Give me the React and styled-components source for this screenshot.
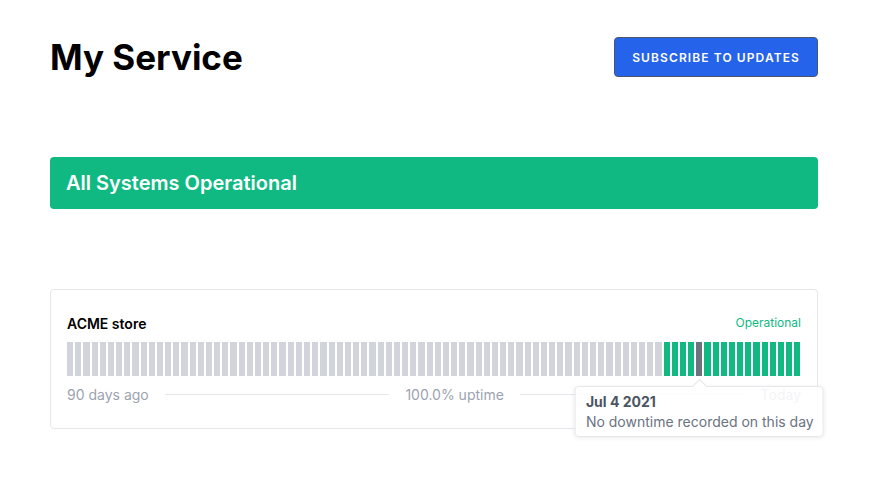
import React from 'react'
import styled, { createGlobalStyle } from 'styled-components'

const GlobalStyle = createGlobalStyle`
  body {
    margin: 0;
    min-height: 100vh;
    background: #ffffff;
    font-family: Inter, "Noto Sans", sans-serif;
    color: #111827;
  }
`

const Page = styled.div`
  width: 768px;
  padding: 37px 0 64px 50px;
`

const Header = styled.header`
  display: flex;
  align-items: center;
  justify-content: space-between;
  height: 40px;
`

const Title = styled.h1`
  margin: 0;
  font-size: 35px;
  line-height: 40px;
  font-weight: 700;
  color: #000000;
`

const SubscribeButton = styled.button`
  height: 40px;
  padding: 0 17px;
  background: #2563eb;
  color: #ffffff;
  border: 1px solid #4a5670;
  border-radius: 4px;
  font-family: Inter, sans-serif;
  font-size: 12px;
  font-weight: 600;
  letter-spacing: 1.1px;
  text-transform: uppercase;
  cursor: pointer;
`

const Banner = styled.div`
  margin-top: 80px;
  height: 52px;
  display: flex;
  align-items: center;
  padding: 0 16px;
  background: #10b981;
  border-radius: 4px;
  color: #ffffff;
  font-size: 20px;
  font-weight: 600;
`

const Card = styled.section`
  margin-top: 80px;
  border: 1px solid #e5e7eb;
  border-radius: 4px;
  padding: 24px 16px;
`

const CardHead = styled.div`
  display: flex;
  justify-content: space-between;
  align-items: center;
  height: 20px;
`

const ServiceName = styled.span`
  font-size: 14px;
  line-height: 20px;
  font-weight: 600;
  color: #000000;
`

const StatusLabel = styled.span`
  font-size: 12px;
  line-height: 16px;
  padding-bottom: 3px;
  color: #10b981;
`

const Bars = styled.div`
  margin-top: 8px;
  display: flex;
  gap: 2px;
  height: 34px;
`

const Bar = styled.div`
  position: relative;
  flex: 1;
  background: ${p => p.$hover ? '#6b7280' : p.$up ? '#10b981' : '#d1d5db'};
`

const Footer = styled.div`
  margin-top: 8px;
  display: flex;
  align-items: center;
  gap: 16px;
  height: 20px;
  font-size: 14px;
  color: #9ca3af;
`

const Rule = styled.div`
  flex: 1;
  height: 1px;
  background: #e5e7eb;
`

const Tooltip = styled.div`
  position: absolute;
  top: 44px;
  left: 50%;
  transform: translateX(-50%);
  z-index: 2;
  padding: 5px 9px 4px 10px;
  background: rgba(255, 255, 255, 0.88);
  border: 1px solid #e5e7eb;
  border-radius: 4px;
  box-shadow: 0 1px 4px rgba(0, 0, 0, 0.08);
  white-space: nowrap;
  font-size: 14px;
  line-height: 20px;
  color: #6b7280;

  &::before {
    content: '';
    position: absolute;
    top: -6px;
    left: 50%;
    width: 10px;
    height: 10px;
    background: #ffffff;
    border-left: 1px solid #e5e7eb;
    border-top: 1px solid #e5e7eb;
    transform: translateX(-50%) rotate(45deg);
  }
`

const TipDate = styled.div`
  font-weight: 700;
  color: #4b5563;
`

const days = Array.from({ length: 90 }, (_, i) => i)

export default function App() {
  return (
    <Page>
      <GlobalStyle />
      <Header>
        <Title>My Service</Title>
        <SubscribeButton>Subscribe to updates</SubscribeButton>
      </Header>
      <Banner>All Systems Operational</Banner>
      <Card>
        <CardHead>
          <ServiceName>ACME store</ServiceName>
          <StatusLabel>Operational</StatusLabel>
        </CardHead>
        <Bars>
          {days.map(i => (
            <Bar key={i} $up={i >= 73} $hover={i === 77}>
              {i === 77 && (
                <Tooltip>
                  <TipDate>Jul 4 2021</TipDate>
                  <div>No downtime recorded on this day</div>
                </Tooltip>
              )}
            </Bar>
          ))}
        </Bars>
        <Footer>
          <span>90 days ago</span>
          <Rule />
          <span>100.0% uptime</span>
          <Rule />
          <span>Today</span>
        </Footer>
      </Card>
    </Page>
  )
}
